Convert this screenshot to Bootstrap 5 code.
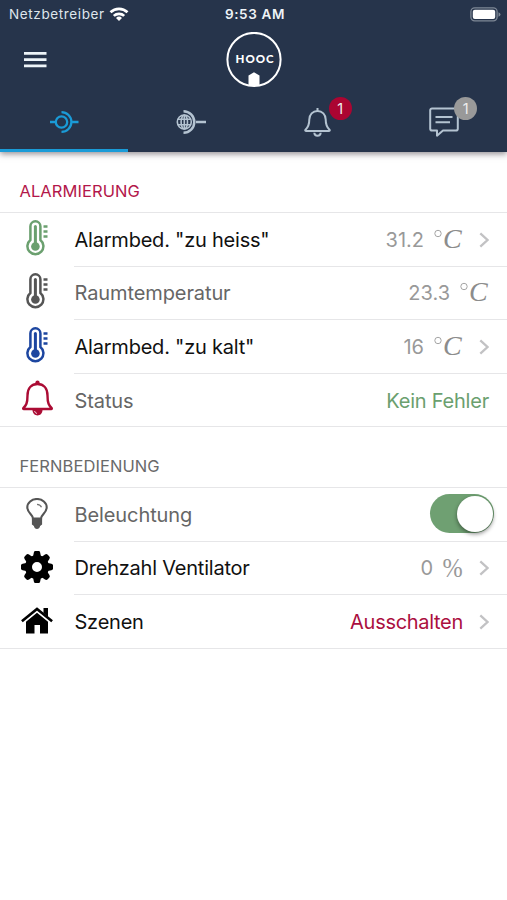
<!DOCTYPE html>
<html lang="de">
<head>
<meta charset="utf-8">
<meta name="viewport" content="width=device-width, initial-scale=1">
<title>HOOC</title>
<link href="https://cdn.jsdelivr.net/npm/bootstrap@5.3.0/dist/css/bootstrap.min.css" rel="stylesheet">
<style>
  body { font-family: Inter, "Liberation Sans", sans-serif; background: #fff; color: #111; overflow: hidden; }
  svg { display: block; flex: none; }
  .app-head { background: #26344b; height: 152px; box-shadow: 0 2px 6px rgba(40, 30, 40, .5); color: #eef3f7; }
  .status-line { height: 28px; font-size: 13.5px; padding: 0 6px 0 9px; }
  .carrier { letter-spacing: .62px; color: #dfe6ec; }
  .clock { font-weight: 600; font-size: 13.5px; letter-spacing: .65px; }
  .brand-line { height: 64px; padding: 0 24px; }
  .tab-line { height: 60px; }
  .tab-cell { border-bottom: 3px solid transparent; color: #b4c3d1; padding: 3px 0 0 0; }
  .tab-cell.on { border-color: #1a9bd7; color: #1a9bd7; padding-left: 1px; }
  .count { left: 25.5px; top: -10px; width: 23px; height: 23px; font-size: 14.5px; color: #eee; }
  .count.red { background: #ab0532; left: 25px; }
  .count.gray { background: #999; }
  .sect { font-size: 16.5px; height: 60.6px; padding: 20px 0 0 19.5px; line-height: 39px; border-bottom: 1px solid #e6e6e8; font-weight: 400; color: #6a6a6a; letter-spacing: .08px; }
  .sect.alarm { color: #b3174a; height: 61px; }
  .entry { height: 53.6px; }
  .entry-icon { width: 74px; padding-bottom: 4px; }
  .controls .entry-icon { padding-bottom: 2px; }
  .entry-body { border-bottom: 1px solid #e6e6e8; padding: 1px 18px 0 .5px; font-size: 20px; letter-spacing: -.22px; }
  .entries > .entry:last-child { border-bottom: 1px solid #e6e6e8; }
  .entries > .entry:last-child .entry-body { border-bottom: 0; }
  .dim { color: #666; letter-spacing: -.1px; }
  .val { color: #999; letter-spacing: 0; }
  .ok { color: #6ba06f; }
  .off { color: #ab0f3f; letter-spacing: -.3px; }
  .toggle { width: 64px; height: 39px; background: #6fa072; padding: 1.5px; margin: -2px -5px 0 0; }
  .knob { width: 36px; height: 36px; background: #fff; box-shadow: 0 2px 4px rgba(0, 0, 0, .45); }
</style>
</head>
<body>
<svg width="0" height="0" class="position-absolute" aria-hidden="true">
  <defs>
    <symbol id="thermo" viewBox="0 0 22 36">
      <path d="M4 19.600V6a5 5 0 0 1 10 0v13.600a8 8 0 1 1-10 0z" fill="none" stroke="currentColor" stroke-width="2.500" transform="translate(.4 .3)"/>
      <circle cx="9.400" cy="26.500" r="4.300" fill="currentColor"/>
      <path d="M9.400 6.500v20" stroke="currentColor" stroke-width="3" stroke-linecap="round"/>
      <path d="M17.500 6.500h4M17.500 11.500h4M17.500 16.500h4" stroke="currentColor" stroke-width="2.300"/>
    </symbol>
    <symbol id="chev" viewBox="0 0 10 16">
      <path d="M1.300 1.300L8.500 8l-7.200 6.700" fill="none" stroke="#c2c2c4" stroke-width="2.300"/>
    </symbol>
  </defs>
</svg>

<header class="app-head position-relative">
  <div class="status-line row g-0 align-items-center">
    <div class="col d-flex align-items-center">
      <span class="carrier">Netzbetreiber</span>
      <svg class="ms-1" width="20" height="15" viewBox="0 0 20 15" fill="none" stroke="#fff" stroke-width="2.700">
        <path d="M1.500 5.300a12.200 12.200 0 0 1 17 0M4.800 8.900a7.500 7.500 0 0 1 10.400 0"/>
        <path d="M10 14l-3-3a4.300 4.300 0 0 1 6 0z" fill="#fff" stroke="none"/>
      </svg>
    </div>
    <div class="col-auto clock">9:53 AM</div>
    <div class="col d-flex justify-content-end">
      <svg width="31" height="15" viewBox="0 0 31 15">
        <rect x=".9" y=".9" width="26.200" height="13" rx="3.800" fill="none" stroke="#7e8896" stroke-width="1.300"/>
        <rect x="2.800" y="2.800" width="22.400" height="9.200" rx="2" fill="#fff"/>
        <path d="M28.500 5.300q2 .7 2 2.200t-2 2.200z" fill="#7e8896"/>
      </svg>
    </div>
  </div>
  <div class="brand-line row g-0 align-items-center">
    <div class="col">
      <svg width="23" height="16" viewBox="0 0 23 16"><path d="M0 1.400h22.500M0 7.600h22.500M0 13.800h22.500" stroke="#edf4f8" stroke-width="2.700"/></svg>
    </div>
    <div class="col-auto">
      <svg width="56" height="56" viewBox="0 0 56 56">
        <circle cx="28" cy="27.500" r="26.600" fill="none" stroke="#fff" stroke-width="2"/>
        <path d="M22.500 54V43.500l5.500-3.300 5.500 3.300V54z" fill="#fff"/>
        <text x="9.500" y="31" fill="#fff" font-family="Lato, sans-serif" font-weight="900" font-size="11.500" letter-spacing="1">HOOC</text>
      </svg>
    </div>
    <div class="col"></div>
  </div>
  <nav class="tab-line row g-0">
    <div class="tab-cell on col d-flex justify-content-center align-items-center">
      <svg width="30" height="24" viewBox="0 0 30 24" fill="none" stroke="currentColor" stroke-width="2.300">
        <circle cx="12.500" cy="12" r="5.700"/><path d="M1 12h6M23.500 12H29.500M12.500 2.100a9.900 9.900 0 1 1 0 19.800"/>
      </svg>
    </div>
    <div class="tab-cell col d-flex justify-content-center align-items-center">
      <svg width="30" height="26" viewBox="0 0 30 26" fill="none" stroke="currentColor" stroke-width="1.600">
        <circle cx="8.300" cy="13" r="7"/><ellipse cx="8.300" cy="13" rx="3.200" ry="7"/><path d="M8.300 6v14M2 10.300h12.600M2 15.700h12.600"/>
        <path d="M20 13h10M7.500 2.200a10.800 10.800 0 1 1 0 21.600" stroke-width="2.500"/>
      </svg>
    </div>
    <div class="tab-cell col d-flex justify-content-center align-items-center">
      <div class="position-relative">
        <svg width="27" height="30" viewBox="0 0 27 30" fill="none" stroke="currentColor" stroke-width="2" stroke-linejoin="round">
          <path d="M13.500 1v3M5.300 12.500c0-5 3.500-8.600 8.200-8.600s8.200 3.600 8.200 8.600c0 6 1.300 7.800 3.600 9.900.9.900.4 1.700-.6 1.700H2.300c-1 0-1.500-.8-.6-1.700 2.300-2.100 3.600-3.900 3.600-9.900zM10.300 25.800c.3 4 6.100 4 6.400 0"/>
        </svg>
        <span class="count red position-absolute rounded-circle d-flex align-items-center justify-content-center">1</span>
      </div>
    </div>
    <div class="tab-cell col d-flex justify-content-center align-items-center">
      <div class="position-relative">
        <svg width="30" height="30" viewBox="0 0 30 30" fill="none" stroke="currentColor" stroke-width="2" stroke-linejoin="round">
          <path d="M3 1.500h24a1.800 1.800 0 0 1 1.800 1.800v18.400a1.800 1.800 0 0 1-1.800 1.800H14L8 28.700v-5.200H3a1.800 1.800 0 0 1-1.800-1.800V3.300A1.800 1.800 0 0 1 3 1.500zM6.500 10h17M6.500 15.300H21"/>
        </svg>
        <span class="count gray position-absolute rounded-circle d-flex align-items-center justify-content-center">1</span>
      </div>
    </div>
  </nav>
</header>

<main>
  <h2 class="sect alarm mb-0">ALARMIERUNG</h2>
  <div class="entries">
    <div class="entry d-flex">
      <div class="entry-icon d-flex align-items-center justify-content-center" style="color:#6ba06f"><svg width="22" height="36"><use href="#thermo"/></svg></div>
      <div class="entry-body flex-fill d-flex align-items-center"><span class="name me-auto">Alarmbed. "zu heiss"</span><span class="val">31.2</span><svg class="ms-2" width="31" height="32" viewBox="0 0 31 32"><circle cx="6" cy="9.500" r="3.200" fill="none" stroke="#a5a5a5"/><text x="11" y="23.500" fill="#8c8c8c" font-family="Liberation Serif, serif" font-style="italic" font-size="26.500" textLength="18.500" lengthAdjust="spacingAndGlyphs">C</text></svg><svg class="ms-3" width="10" height="16"><use href="#chev"/></svg></div>
    </div>
    <div class="entry d-flex">
      <div class="entry-icon d-flex align-items-center justify-content-center" style="color:#555"><svg width="22" height="36"><use href="#thermo"/></svg></div>
      <div class="entry-body flex-fill d-flex align-items-center"><span class="name dim me-auto">Raumtemperatur</span><span class="val">23.3</span><svg class="ms-2" width="31" height="32" viewBox="0 0 31 32"><circle cx="6" cy="9.500" r="3.200" fill="none" stroke="#a5a5a5"/><text x="11" y="23.500" fill="#8c8c8c" font-family="Liberation Serif, serif" font-style="italic" font-size="26.500" textLength="18.500" lengthAdjust="spacingAndGlyphs">C</text></svg></div>
    </div>
    <div class="entry d-flex">
      <div class="entry-icon d-flex align-items-center justify-content-center" style="color:#1d46a0"><svg width="22" height="36"><use href="#thermo"/></svg></div>
      <div class="entry-body flex-fill d-flex align-items-center"><span class="name me-auto">Alarmbed. "zu kalt"</span><span class="val">16</span><svg class="ms-2" width="31" height="32" viewBox="0 0 31 32"><circle cx="6" cy="9.500" r="3.200" fill="none" stroke="#a5a5a5"/><text x="11" y="23.500" fill="#8c8c8c" font-family="Liberation Serif, serif" font-style="italic" font-size="26.500" textLength="18.500" lengthAdjust="spacingAndGlyphs">C</text></svg><svg class="ms-3" width="10" height="16"><use href="#chev"/></svg></div>
    </div>
    <div class="entry d-flex">
      <div class="entry-icon d-flex align-items-center justify-content-center">
        <svg width="33" height="36" viewBox="0 0 33 36"><path d="M6.500 15.500C6.500 8 10.500 4 16.500 4s10 4 10 11.500c0 8 1.500 10 4 12.300.6.600.4 1.200-.4 1.200H2.900c-.8 0-1-.6-.4-1.200 2.500-2.300 4-4.300 4-12.300z" fill="none" stroke="#ab0c34" stroke-width="2.400" stroke-linejoin="round"/><circle cx="16.500" cy="2.500" r="2.100" fill="#ab0c34"/><path d="M11.500 30h10c0 7.200-10 7.200-10 0z" fill="#ab0c34"/><path d="M13.500 31q.5 2 2.500 2.500" stroke="#fff" stroke-width=".8" fill="none"/></svg>
      </div>
      <div class="entry-body flex-fill d-flex align-items-center"><span class="name dim me-auto">Status</span><span class="ok">Kein Fehler</span></div>
    </div>
  </div>

  <h2 class="sect mb-0">FERNBEDIENUNG</h2>
  <div class="entries controls">
    <div class="entry d-flex">
      <div class="entry-icon d-flex align-items-center justify-content-center">
        <svg width="22" height="32" viewBox="0 0 22 32"><path d="M7 20.500c0-4-5.700-5.500-5.700-11.200a9.700 8.300 0 0 1 19.400 0c0 5.700-5.700 7.200-5.700 11.200z" fill="none" stroke="#555" stroke-width="2.100"/><path d="M5.900 20h10.200v6.500l-2 1.500c-.5 4-5.700 4-6.200 0l-2-1.500z" fill="#555"/><path d="M11 6.300q3.500.2 4.500 3" fill="none" stroke="#777" stroke-width="1.300"/></svg>
      </div>
      <div class="entry-body flex-fill d-flex align-items-center"><span class="name dim me-auto">Beleuchtung</span><span class="toggle rounded-pill d-flex justify-content-end"><span class="knob rounded-circle"></span></span></div>
    </div>
    <div class="entry d-flex">
      <div class="entry-icon d-flex align-items-center justify-content-center">
        <svg width="32" height="32" viewBox="-16 -16 32 32">
          <circle r="8.500" fill="none" stroke="#000" stroke-width="7"/>
          <g stroke="#000" stroke-width="4.400" stroke-linejoin="round"><path d="M-1-14l-1 5h4l-1-5zM-1 14l-1-5h4l-1 5zM-14-1l5-1v4l-5-1zM14-1l-5-1v4l5-1z"/><path d="M-1-14l-1 5h4l-1-5zM-1 14l-1-5h4l-1 5zM-14-1l5-1v4l-5-1zM14-1l-5-1v4l5-1z" transform="rotate(45)"/></g>
        </svg>
      </div>
      <div class="entry-body flex-fill d-flex align-items-center"><span class="name me-auto">Drehzahl Ventilator</span><span class="val">0</span><svg class="ms-2" width="22" height="32" viewBox="0 0 22 32"><text x="1.500" y="24.500" fill="#999" font-family="Liberation Serif, serif" font-size="27" textLength="20" lengthAdjust="spacingAndGlyphs">%</text></svg><svg class="ms-3" width="10" height="16"><use href="#chev"/></svg></div>
    </div>
    <div class="entry d-flex">
      <div class="entry-icon d-flex align-items-center justify-content-center">
        <svg width="32" height="27" viewBox="0 0 32 27"><path d="M22.500 1H27v9l-4.500-4z"/><path d="M.9 14.300L16 2l15.100 12.300" fill="none" stroke="#000" stroke-width="2.600"/><path d="M16 5.800l11 9V26.500h-8V18h-5.500v8.500H5V14.800z"/></svg>
      </div>
      <div class="entry-body flex-fill d-flex align-items-center"><span class="name me-auto">Szenen</span><span class="off">Ausschalten</span><svg class="ms-3" width="10" height="16"><use href="#chev"/></svg></div>
    </div>
  </div>
</main>
<script src="https://cdn.jsdelivr.net/npm/bootstrap@5.3.0/dist/js/bootstrap.bundle.min.js"></script>
</body>
</html>
